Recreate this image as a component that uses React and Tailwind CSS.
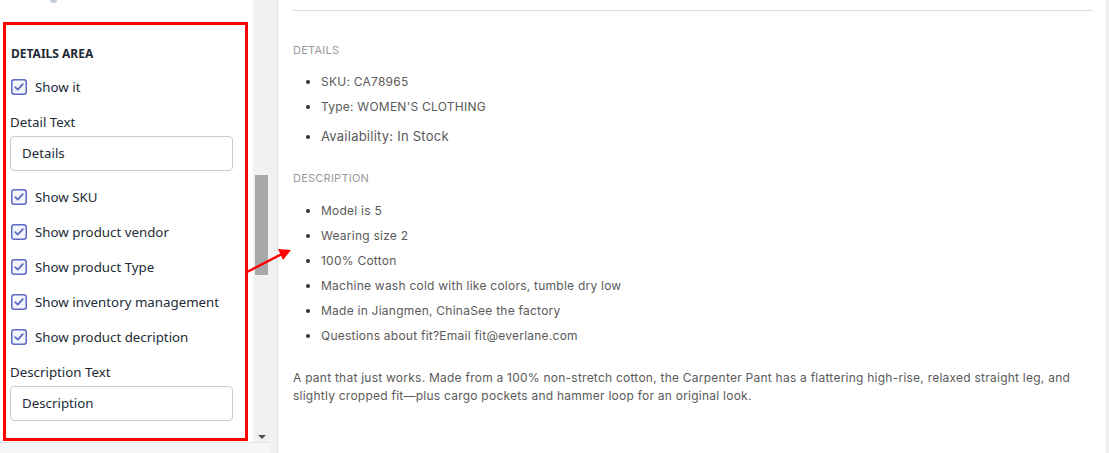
import React from "react";

function Check() {
  return (
    <svg width="16" height="16" viewBox="0 0 16 16" className="shrink-0">
      <rect x="0.75" y="0.75" width="14.5" height="14.5" rx="2.5" fill="#f4f5fb" stroke="#5c6ac4" strokeWidth="1.5" />
      <path d="M4.2 8.2 L6.8 10.6 L11.8 5.2" fill="none" stroke="#5c6ac4" strokeWidth="1.8" strokeLinecap="round" strokeLinejoin="round" />
    </svg>
  );
}

function Row({ label, className = "" }) {
  return (
    <div className={"flex h-[20px] items-center gap-[8px] pl-[1px] " + className}>
      <Check />
      <span className="pt-px">{label}</span>
    </div>
  );
}

function Input({ value }) {
  return (
    <div className="flex h-[35px] w-[223px] items-center rounded-[4px] border border-[#c4cdd5] bg-white pl-[11px] text-[#212b36]">
      {value}
    </div>
  );
}

export default function App() {
  const sans = { fontFamily: '"Noto Sans", "Open Sans", sans-serif' };
  return (
    <div className="relative flex h-[453px] w-[1109px] overflow-hidden bg-white">
      {/* Sidebar */}
      <div className="flex w-[270px] shrink-0 flex-col">
        <div className="flex h-[443px] border-b border-[#e1e3e5]">
          <div
            className="w-[253px] shrink-0 bg-white text-[13.3px] text-[#212b36]"
            style={sans}
          >
            <div className="ml-[50px] h-[3px] w-[7px] rounded-b-full bg-[#c4cdd5]" />
            <div className="mt-[19px] ml-[3px] h-[419px] w-[245px] border-[3px] border-[#ff0000] pt-[21px] pl-[4px]">
              <div className="flex h-[16px] items-center pl-[1px] text-[12px] font-bold text-[#212b36]">
                DETAILS AREA
              </div>
              <Row label="Show it" className="mt-[15px]" />
              <div className="mt-[15px] flex h-[20px] items-center pt-px">Detail Text</div>
              <div className="mt-[4px]">
                <Input value="Details" />
              </div>
              <Row label="Show SKU" className="mt-[16px]" />
              <Row label="Show product vendor" className="mt-[15px]" />
              <Row label="Show product Type" className="mt-[15px]" />
              <Row label="Show inventory management" className="mt-[15px]" />
              <Row label="Show product decription" className="mt-[15px]" />
              <div className="mt-[15px] flex h-[20px] items-center pt-px">Description Text</div>
              <div className="mt-[4px]">
                <Input value="Description" />
              </div>
            </div>
          </div>
          {/* scrollbar */}
          <div className="flex w-[17px] shrink-0 flex-col items-center bg-[#f1f1f1]">
            <div className="mt-[175px] h-[100px] w-[13px] bg-[#a8a8a8]" />
            <div className="flex-1" />
            <div className="mb-[3px] h-0 w-0 border-x-[4px] border-t-[4px] border-x-transparent border-t-[#505050]" />
          </div>
        </div>
        <div className="flex-1 bg-[#f6f6f7]" />
      </div>

      {/* gutter */}
      <div className="w-[8px] shrink-0 border-r border-[#dfe3e8] bg-[#f0f1f2]" />

      {/* Main */}
      <div
        className="flex-1 bg-white pl-[15px] pr-[13px] tracking-[0.24px] text-[#5a5a5a]"
        style={{ fontFamily: 'Inter, "Noto Sans", sans-serif' }}
      >
        <div className="mt-[10px] h-px bg-[#dddddd]" />
        <div className="mt-[32px] text-[11px] leading-[14px] text-[#9a9a9a]">DETAILS</div>
        <ul className="mt-[17px] list-disc pl-[28px] text-[12px] leading-[16px] marker:text-[#333]">
          <li>SKU: CA78965</li>
          <li className="mt-[9px]">Type: WOMEN'S CLOTHING</li>
          <li className="mt-[12px] text-[13px] leading-[18px]">Availability: In Stock</li>
        </ul>
        <div className="mt-[26px] text-[11px] leading-[14px] text-[#9a9a9a]">DESCRIPTION</div>
        <ul className="mt-[18px] flex list-disc flex-col gap-[9px] pl-[28px] text-[12px] leading-[16px] marker:text-[#333]">
          <li>Model is 5</li>
          <li>Wearing size 2</li>
          <li>100% Cotton</li>
          <li>Machine wash cold with like colors, tumble dry low</li>
          <li>Made in Jiangmen, ChinaSee the factory</li>
          <li>Questions about fit?Email fit@everlane.com</li>
        </ul>
        <p className="mt-[25px] text-[12px] leading-[18px]">
          A pant that just works. Made from a 100% non-stretch cotton, the Carpenter Pant has a flattering high-rise, relaxed straight leg, and
          <br />
          slightly cropped fit—plus cargo pockets and hammer loop for an original look.
        </p>
      </div>
      <div className="w-[3px] shrink-0 border-l border-[#eeeeee] bg-[#f1f1f1]" />

      {/* annotation arrow */}
      <svg className="pointer-events-none absolute left-0 top-0" width="1109" height="453">
        <line x1="247" y1="272" x2="282" y2="254" stroke="#ff0000" strokeWidth="2.5" />
        <polygon points="291,250 278,249 283,260" fill="#ff0000" />
      </svg>
    </div>
  );
}
